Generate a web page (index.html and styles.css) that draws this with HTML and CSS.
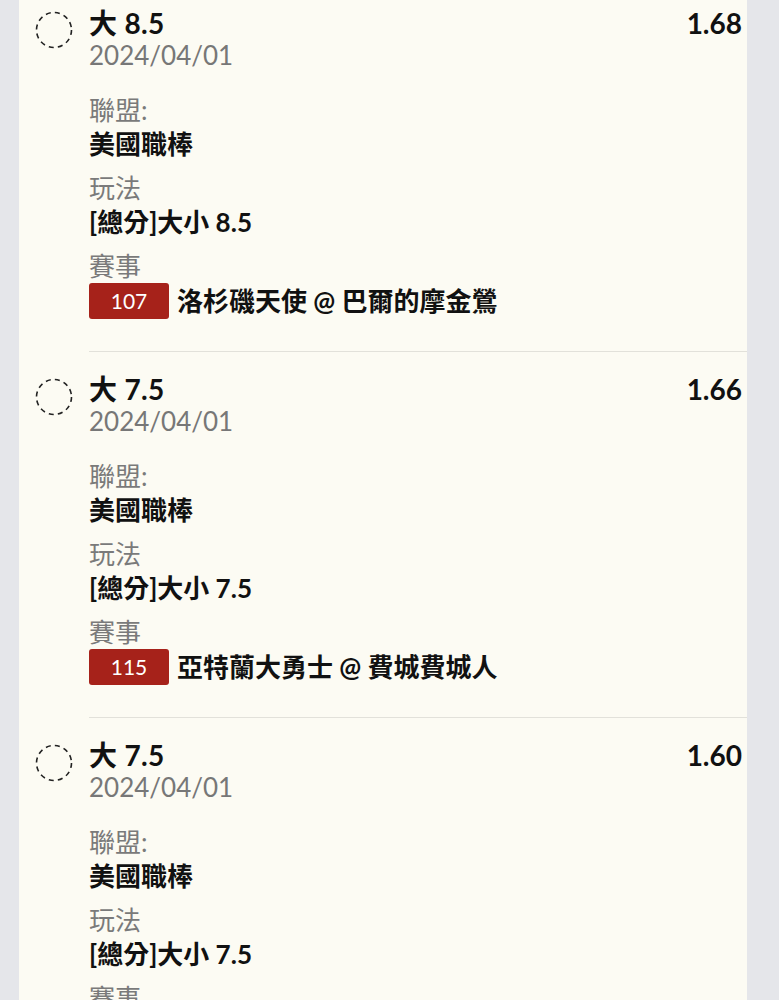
FILE: index.html
```html
<!DOCTYPE html>
<html lang="zh-Hant">
<head>
   <meta charset="UTF-8">
   <meta name="viewport" content="width=device-width, initial-scale=1.0">
   <title>投注紀錄</title>
   <link rel="stylesheet" href="styles.css">
</head>
<body>

   <div class="card">

      <div class="bet first">
         <div class="bet-check">
            <svg width="38" height="38" viewBox="0 0 38 38"><circle cx="19" cy="19" r="17.5" fill="none" stroke="#222" stroke-width="1.6" stroke-dasharray="5 4.2"/></svg>
         </div>
         <div class="bet-body">
            <div class="bet-head">
               <div class="bet-title">大 8.5</div>
               <div class="bet-odds">1.68</div>
            </div>
            <div class="bet-date">2024/04/01</div>
            <div class="field first-field">
               <div class="field-label">聯盟:</div>
               <div class="field-value">美國職棒</div>
            </div>
            <div class="field">
               <div class="field-label">玩法</div>
               <div class="field-value">[總分]大小 8.5</div>
            </div>
            <div class="field">
               <div class="field-label">賽事</div>
               <div class="match">
                  <span class="match-no">107</span>
                  <span class="match-name">洛杉磯天使 @ 巴爾的摩金鶯</span>
               </div>
            </div>
         </div>
      </div>

      <div class="bet">
         <div class="bet-check">
            <svg width="38" height="38" viewBox="0 0 38 38"><circle cx="19" cy="19" r="17.5" fill="none" stroke="#222" stroke-width="1.6" stroke-dasharray="5 4.2"/></svg>
         </div>
         <div class="bet-body">
            <div class="bet-head">
               <div class="bet-title">大 7.5</div>
               <div class="bet-odds">1.66</div>
            </div>
            <div class="bet-date">2024/04/01</div>
            <div class="field first-field">
               <div class="field-label">聯盟:</div>
               <div class="field-value">美國職棒</div>
            </div>
            <div class="field">
               <div class="field-label">玩法</div>
               <div class="field-value">[總分]大小 7.5</div>
            </div>
            <div class="field">
               <div class="field-label">賽事</div>
               <div class="match">
                  <span class="match-no">115</span>
                  <span class="match-name">亞特蘭大勇士 @ 費城費城人</span>
               </div>
            </div>
         </div>
      </div>

      <div class="bet">
         <div class="bet-check">
            <svg width="38" height="38" viewBox="0 0 38 38"><circle cx="19" cy="19" r="17.5" fill="none" stroke="#222" stroke-width="1.6" stroke-dasharray="5 4.2"/></svg>
         </div>
         <div class="bet-body">
            <div class="bet-head">
               <div class="bet-title">大 7.5</div>
               <div class="bet-odds">1.60</div>
            </div>
            <div class="bet-date">2024/04/01</div>
            <div class="field first-field">
               <div class="field-label">聯盟:</div>
               <div class="field-value">美國職棒</div>
            </div>
            <div class="field">
               <div class="field-label">玩法</div>
               <div class="field-value">[總分]大小 7.5</div>
            </div>
            <div class="field">
               <div class="field-label">賽事</div>
               <div class="match">
                  <span class="match-no">112</span>
                  <span class="match-name">芝加哥小熊 @ 科羅拉多落磯</span>
               </div>
            </div>
         </div>
      </div>

   </div>

</body>
</html>
```

FILE: styles.css
```css
body {
   margin: 0;
   padding: 0;
   background-color: #e5e6ea;
   font-family: Lato, "Noto Sans CJK TC", sans-serif;
   color: #111;
}
.card {
   margin-left: 19px;
   width: 728px;
   background-color: #fcfbf3;
}
.bet {
   display: flex;
   gap: 16px;
   padding-left: 16px;
}
.bet-check {
   width: 38px;
   flex-shrink: 0;
   padding-top: 26px;
}
.bet-check svg {
   display: block;
}
.bet.first .bet-check {
   padding-top: 11px;
}
.bet-body {
   flex: 1;
   padding: 21px 5px 32px 0;
   border-bottom: 1px solid #e2e1da;
}
.bet.first .bet-body {
   padding-top: 7px;
}
.bet-head {
   display: flex;
   justify-content: space-between;
   align-items: center;
}
.bet-title, .bet-odds {
   font-size: 28px;
   font-weight: 700;
   line-height: 32px;
}
.bet-title {
   letter-spacing: 0.3px;
}
.bet-date {
   font-size: 26px;
   line-height: 32px;
   color: #777;
}
.field {
   margin-top: 10px;
}
.field.first-field {
   margin-top: 22px;
}
.field-label {
   font-size: 26px;
   line-height: 34px;
   color: #7a7a7a;
}
.field-value {
   font-size: 26px;
   line-height: 34px;
   font-weight: 700;
}
.match {
   display: flex;
   align-items: center;
   gap: 8px;
}
.match-no {
   width: 80px;
   height: 36px;
   line-height: 36px;
   text-align: center;
   background-color: #a6221a;
   color: #fff;
   font-size: 21px;
   border-radius: 3px;
}
.match-name {
   font-size: 26px;
   font-weight: 700;
   line-height: 36px;
}
```
